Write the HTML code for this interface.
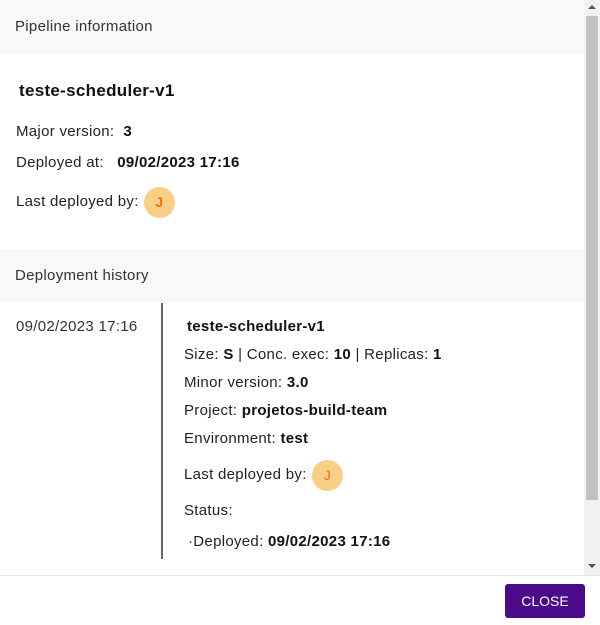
<!DOCTYPE html>
<html><head><style>
*{margin:0;padding:0;box-sizing:border-box}
body{width:600px;height:625px;background:#fff;font-family:"Liberation Sans",sans-serif;color:#222;position:relative;overflow:hidden;font-size:15px;letter-spacing:0.3px}
.a{position:absolute;white-space:nowrap;line-height:20px}
.hd{position:absolute;left:0;width:584px;background:#f8f8f8}
b{font-weight:bold;color:#111}
.av{display:inline-block;vertical-align:middle;margin-left:5px;width:31px;height:31px;border-radius:50%;background:#f9cf86;color:#e07a10;font-size:14px;text-align:center;line-height:31px;font-weight:bold;letter-spacing:0}
</style></head><body>
<div class="hd" style="top:0;height:54px"></div>
<div class="a" style="left:15px;top:17px;color:#333">Pipeline information</div>
<div class="a" style="left:19px;top:81px;font-size:17px;font-weight:bold;color:#111">teste-scheduler-v1</div>
<div class="a" style="left:16px;top:122px">Major version:&nbsp; <b>3</b></div>
<div class="a" style="left:16px;top:153px">Deployed at: &nbsp; <b>09/02/2023 17:16</b></div>
<div class="a" style="left:16px;top:186px;line-height:31px">Last deployed by:<span class="av">J</span></div>
<div class="hd" style="top:249px;height:53px"></div>
<div class="a" style="left:15px;top:266px;color:#333">Deployment history</div>
<div class="a" style="left:16px;top:317px;color:#333">09/02/2023 17:16</div>
<div style="position:absolute;left:161px;top:303px;width:2px;height:256px;background:#666"></div>
<div class="a" style="left:187px;top:317px;font-weight:bold;color:#111">teste-scheduler-v1</div>
<div class="a" style="left:184px;top:345px">Size: <b>S</b> | Conc. exec: <b>10</b> | Replicas: <b>1</b></div>
<div class="a" style="left:184px;top:373px">Minor version: <b>3.0</b></div>
<div class="a" style="left:184px;top:401px">Project: <b>projetos-build-team</b></div>
<div class="a" style="left:184px;top:429px">Environment: <b>test</b></div>
<div class="a" style="left:184px;top:459px;line-height:31px">Last deployed by:<span class="av" style="font-weight:normal">J</span></div>
<div class="a" style="left:184px;top:501px">Status:</div>
<div class="a" style="left:188px;top:532px">·Deployed: <b>09/02/2023 17:16</b></div>
<div style="position:absolute;left:584px;top:0;width:16px;height:575px;background:#f1f1f1"></div>
<div style="position:absolute;left:586px;top:16px;width:12px;height:484px;background:#c1c1c1"></div>
<div style="position:absolute;left:588px;top:5px;border:4px solid transparent;border-bottom-color:#505050;border-top:0"></div>
<div style="position:absolute;left:588px;top:564px;border:4px solid transparent;border-top-color:#505050;border-bottom:0"></div>
<div style="position:absolute;left:0;top:575px;width:600px;height:1px;background:#e8e8e8"></div>
<div style="position:absolute;left:505px;top:584px;width:80px;height:34px;background:#4a0a8a;border-radius:3px;color:#fff;font-size:14px;text-align:center;line-height:34px;letter-spacing:0">CLOSE</div>
</body></html>
